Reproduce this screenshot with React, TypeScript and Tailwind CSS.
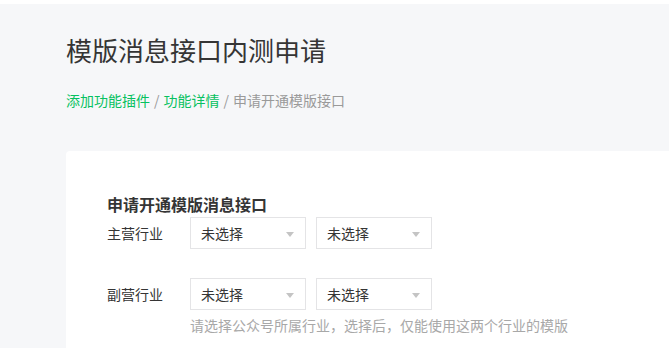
import React from "react";

const font = { fontFamily: '"Noto Sans CJK SC", "Noto Sans", sans-serif' };

function Select() {
  return (
    <div className="relative flex h-[32px] w-[116px] items-center border border-[#e4e4e6] bg-white pl-[10px] text-[14px] leading-[30px] text-[#353535]">
      <span>未选择</span>
      <span className="absolute right-[11px] top-[14px] h-0 w-0 border-x-[4.5px] border-t-[5px] border-x-transparent border-t-[#c4c4c4]" />
    </div>
  );
}

function Row({ label, children }: { label: string; children?: React.ReactNode }) {
  return (
    <div className="flex">
      <div className="w-[83px] shrink-0 text-[14px] leading-[32px] text-[#353535]">{label}</div>
      <div className="flex flex-col">
        <div className="flex gap-[10px]">
          <Select />
          <Select />
        </div>
        {children}
      </div>
    </div>
  );
}

export default function App() {
  return (
    <div style={font} className="h-[348px] w-[669px] overflow-hidden bg-white">
      <div className="mt-[4px] h-[344px] bg-[#f6f7f9] pl-[66px] pt-[28px]">
        <h1 className="text-[26px] font-normal leading-[36px] text-[#353535]">模版消息接口内测申请</h1>
        <div className="mt-[22px] text-[14px] leading-[20px] text-[#9a9a9a]">
          <span className="text-[#07c160]">添加功能插件</span>
          <span className="mx-[4px]">/</span>
          <span className="text-[#07c160]">功能详情</span>
          <span className="mx-[4px]">/</span>
          <span>申请开通模版接口</span>
        </div>
        <div className="mt-[41px] w-[700px] rounded-[4px] bg-white pl-[41px] pt-[41px] pb-[40px]">
          <div className="text-[16px] font-bold leading-[24px] text-[#353535]">申请开通模版消息接口</div>
          <div className="mt-[1px]">
            <Row label="主营行业" />
          </div>
          <div className="mt-[29px]">
            <Row label="副营行业">
              <div className="mt-[5px] text-[14px] leading-[20px] text-[#a8a8a8]">
                请选择公众号所属行业，选择后，仅能使用这两个行业的模版
              </div>
            </Row>
          </div>
        </div>
      </div>
    </div>
  );
}
